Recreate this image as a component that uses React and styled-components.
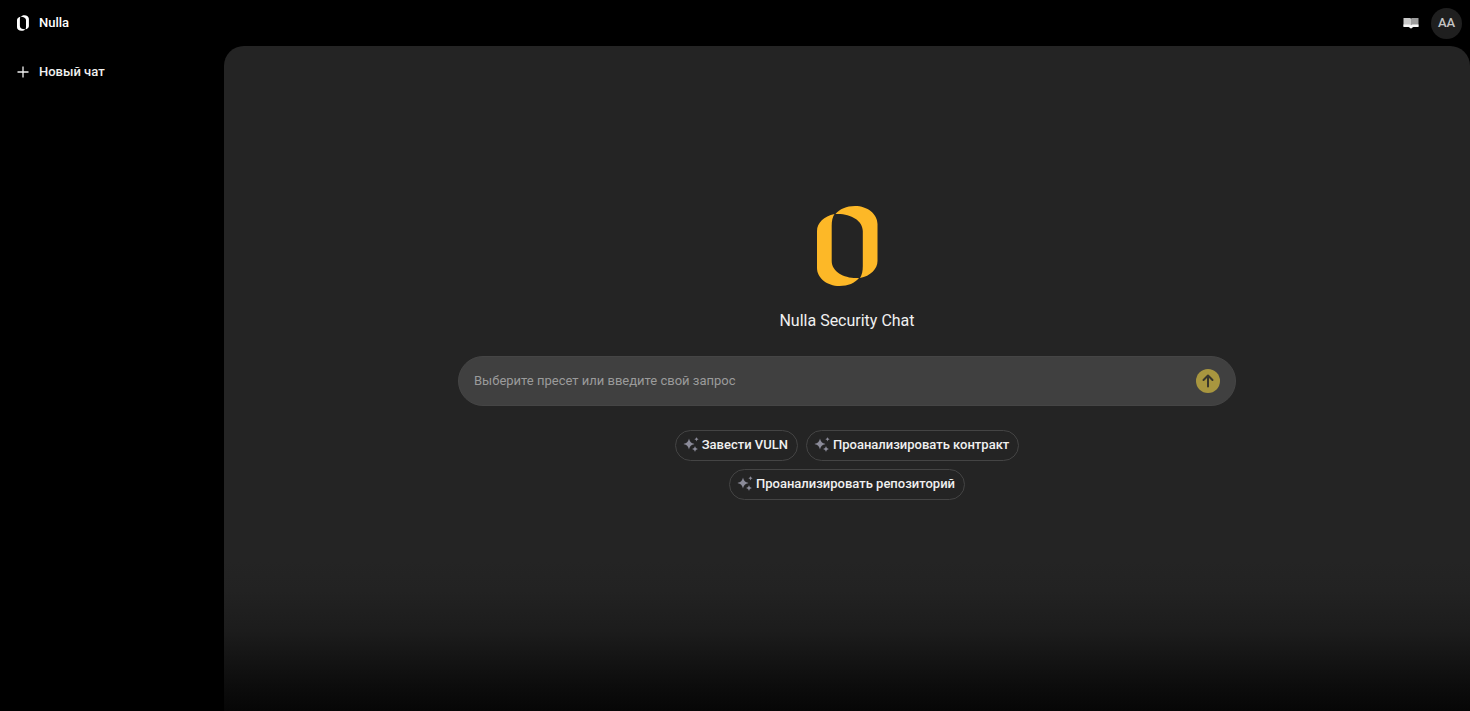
import React, { useState } from 'react';
import styled, { createGlobalStyle } from 'styled-components';

const presets = ['Завести VULN', 'Проанализировать контракт', 'Проанализировать репозиторий'];

const Logo = ({ width, height, title }) => (
  <svg width={width} height={height} viewBox="0 0 61 80" fill="currentColor" role="img" aria-label={title}>
    <path d="M17.5 8C7 10 0 17 0 25V62C0 72 10 80 22.5 80C31 80 38 77 42 72C28 73 14.7 66 14.7 55V20C14.7 15 15.5 11 17.5 8Z" />
    <path d="M43 72C53.5 70 60.5 63 60.5 55V18C60.5 8 50.5 0 38 0C29.5 0 22.5 3 18.5 8C32.5 7 45.8 14 45.8 25V60C45.8 65 45 69 43 72Z" />
  </svg>
);

const PlusIcon = () => (
  <svg width="12" height="12" viewBox="0 0 12 12" stroke="currentColor" strokeWidth="1.3" aria-hidden="true">
    <path d="M6 0.5V11.5M0.5 6H11.5" />
  </svg>
);

const BookIcon = () => (
  <svg width="16" height="12" viewBox="0 0 16 12" aria-hidden="true">
    <path d="M0.5 1H6.5C7.3 1 8 1.4 8 2V9.5H0.5Z" fill="#c9c9c9" />
    <path d="M15.5 1H9.5C8.7 1 8 1.4 8 2V9.5H15.5Z" fill="#9c9c9c" />
    <path d="M0.5 7.5H6C7 7.5 7.5 8 8 8.4C8.5 8 9 7.5 10 7.5H15.5V10H10.5C9.5 10 9 11.6 8 11.6C7 11.6 6.5 10 5.5 10H0.5Z" fill="#f7f7f7" />
  </svg>
);

const ArrowIcon = () => (
  <svg width="12" height="14" viewBox="0 0 12 14" fill="none" stroke="currentColor" strokeWidth="2" strokeLinecap="round" strokeLinejoin="round" aria-hidden="true">
    <path d="M6 12.5V1.5M1.5 6L6 1.5L10.5 6" />
  </svg>
);

const SparklesIcon = () => (
  <svg width="16" height="16" viewBox="0 0 16 16" fill="currentColor" aria-hidden="true">
    <path d="M6 1.5C7 5 8 6 11.5 7C8 8 7 9 6 12.5C5 9 4 8 0.5 7C4 6 5 5 6 1.5Z" />
    <path d="M13.5 0C14 1.5 14.2 1.7 15.7 2.2C14.2 2.7 14 2.9 13.5 4.4C13 2.9 12.8 2.7 11.3 2.2C12.8 1.7 13 1.5 13.5 0Z" />
    <path d="M12 9C12.6 11 13 11.4 15 12C13 12.6 12.6 13 12 15C11.4 13 11 12.6 9 12C11 11.4 11.4 11 12 9Z" />
  </svg>
);

const App = () => {
  const [query, setQuery] = useState('');

  const submitHandler = (e) => {
    e.preventDefault();
    setQuery('');
  };

  return (
    <>
      <GlobalStyle />
      <Page>
        <Header>
          <Brand href="/">
            <Logo width={12} height={16} title="Nulla" />
            <span>Nulla</span>
          </Brand>
          <HeaderActions>
            <IconButton type="button" aria-label="Документация"><BookIcon /></IconButton>
            <Avatar type="button">АА</Avatar>
          </HeaderActions>
        </Header>
        <Body>
          <Sidebar>
            <NewChat type="button">
              <PlusIcon />
              Новый чат
            </NewChat>
          </Sidebar>
          <Main>
            <HeroLogo><Logo width={61} height={80} title="Nulla" /></HeroLogo>
            <Title>Nulla Security Chat</Title>
            <Composer onSubmit={submitHandler}>
              <QueryInput
                type="text"
                aria-label="Запрос"
                placeholder="Выберите пресет или введите свой запрос"
                value={query}
                onChange={(e) => setQuery(e.target.value)}
              />
              <SendButton type="submit" aria-label="Отправить"><ArrowIcon /></SendButton>
            </Composer>
            <Presets>
              {presets.map((preset) => (
                <Preset key={preset} type="button" onClick={() => setQuery(preset)}>
                  <SparklesIcon />
                  <span>{preset}</span>
                </Preset>
              ))}
            </Presets>
          </Main>
        </Body>
      </Page>
    </>
  );
};

const GlobalStyle = createGlobalStyle`
  * {
    box-sizing: border-box;
  }

  body {
    margin: 0;
    background: #000;
    color: #f0f0f0;
    font-family: Roboto, "Liberation Sans", sans-serif;
    font-size: 13px;
    line-height: 18px;
  }

  button, input {
    font: inherit;
    color: inherit;
  }

  button {
    padding: 0;
    border: none;
    background: none;
    cursor: pointer;
  }

  svg {
    display: block;
    flex-shrink: 0;
  }
`;

const Page = styled.div`
  display: flex;
  flex-direction: column;
  min-height: 100vh;
`;

const Header = styled.header`
  display: flex;
  align-items: center;
  justify-content: space-between;
  height: 46px;
  padding: 0 8px 0 17px;
`;

const Brand = styled.a`
  display: flex;
  align-items: center;
  gap: 10px;
  color: #fff;
  font-weight: 500;
  text-decoration: none;
`;

const HeaderActions = styled.div`
  display: flex;
  align-items: center;
  gap: 4px;
`;

const IconButton = styled.button`
  display: grid;
  place-items: center;
  width: 32px;
  height: 31px;
`;

const Avatar = styled.button`
  width: 31px;
  height: 31px;
  border-radius: 50%;
  background: #1f1f1f;
  color: #c4c4c4;
  font-weight: 500;
`;

const Body = styled.div`
  display: flex;
  flex: 1;
`;

const Sidebar = styled.aside`
  flex: 0 0 224px;
  padding: 17px;
`;

const NewChat = styled.button`
  display: flex;
  align-items: center;
  gap: 10px;
  font-weight: 500;
`;

const Main = styled.main`
  display: flex;
  flex: 1;
  flex-direction: column;
  align-items: center;
  justify-content: center;
  min-width: 0;
  padding: 24px 24px 76px;
  border-radius: 20px 20px 0 0;
  background: linear-gradient(to top, #060606, #0c0c0c 24px, #1c1c1c 80px, #222 120px, #242424 150px);
`;

const HeroLogo = styled.div`
  color: #fdb827;
`;

const Title = styled.h1`
  margin: 24px 0;
  font-size: 16px;
  line-height: 22px;
  font-weight: 400;
`;

const Composer = styled.form`
  display: flex;
  align-items: center;
  width: 100%;
  max-width: 778px;
  height: 50px;
  padding: 0 15px;
  border: 1px solid #454545;
  border-radius: 25px;
  background: #404040;
`;

const QueryInput = styled.input`
  flex: 1;
  min-width: 0;
  padding: 0;
  border: none;
  outline: none;
  background: transparent;

  &::placeholder {
    color: #9b9b9b;
    opacity: 1;
  }
`;

const SendButton = styled.button`
  display: grid;
  place-items: center;
  width: 24px;
  height: 24px;
  border-radius: 50%;
  background: #a8963f;
  color: #38362c;
`;

const Presets = styled.div`
  display: flex;
  flex-wrap: wrap;
  justify-content: center;
  gap: 8px;
  max-width: 400px;
  margin-top: 24px;
`;

const Preset = styled.button`
  display: flex;
  align-items: center;
  gap: 3px;
  height: 31px;
  padding: 0 9px 0 7px;
  border: 1px solid #444;
  border-radius: 16px;
  font-weight: 500;

  svg {
    color: #8b8b99;
  }
`;

export default App;
